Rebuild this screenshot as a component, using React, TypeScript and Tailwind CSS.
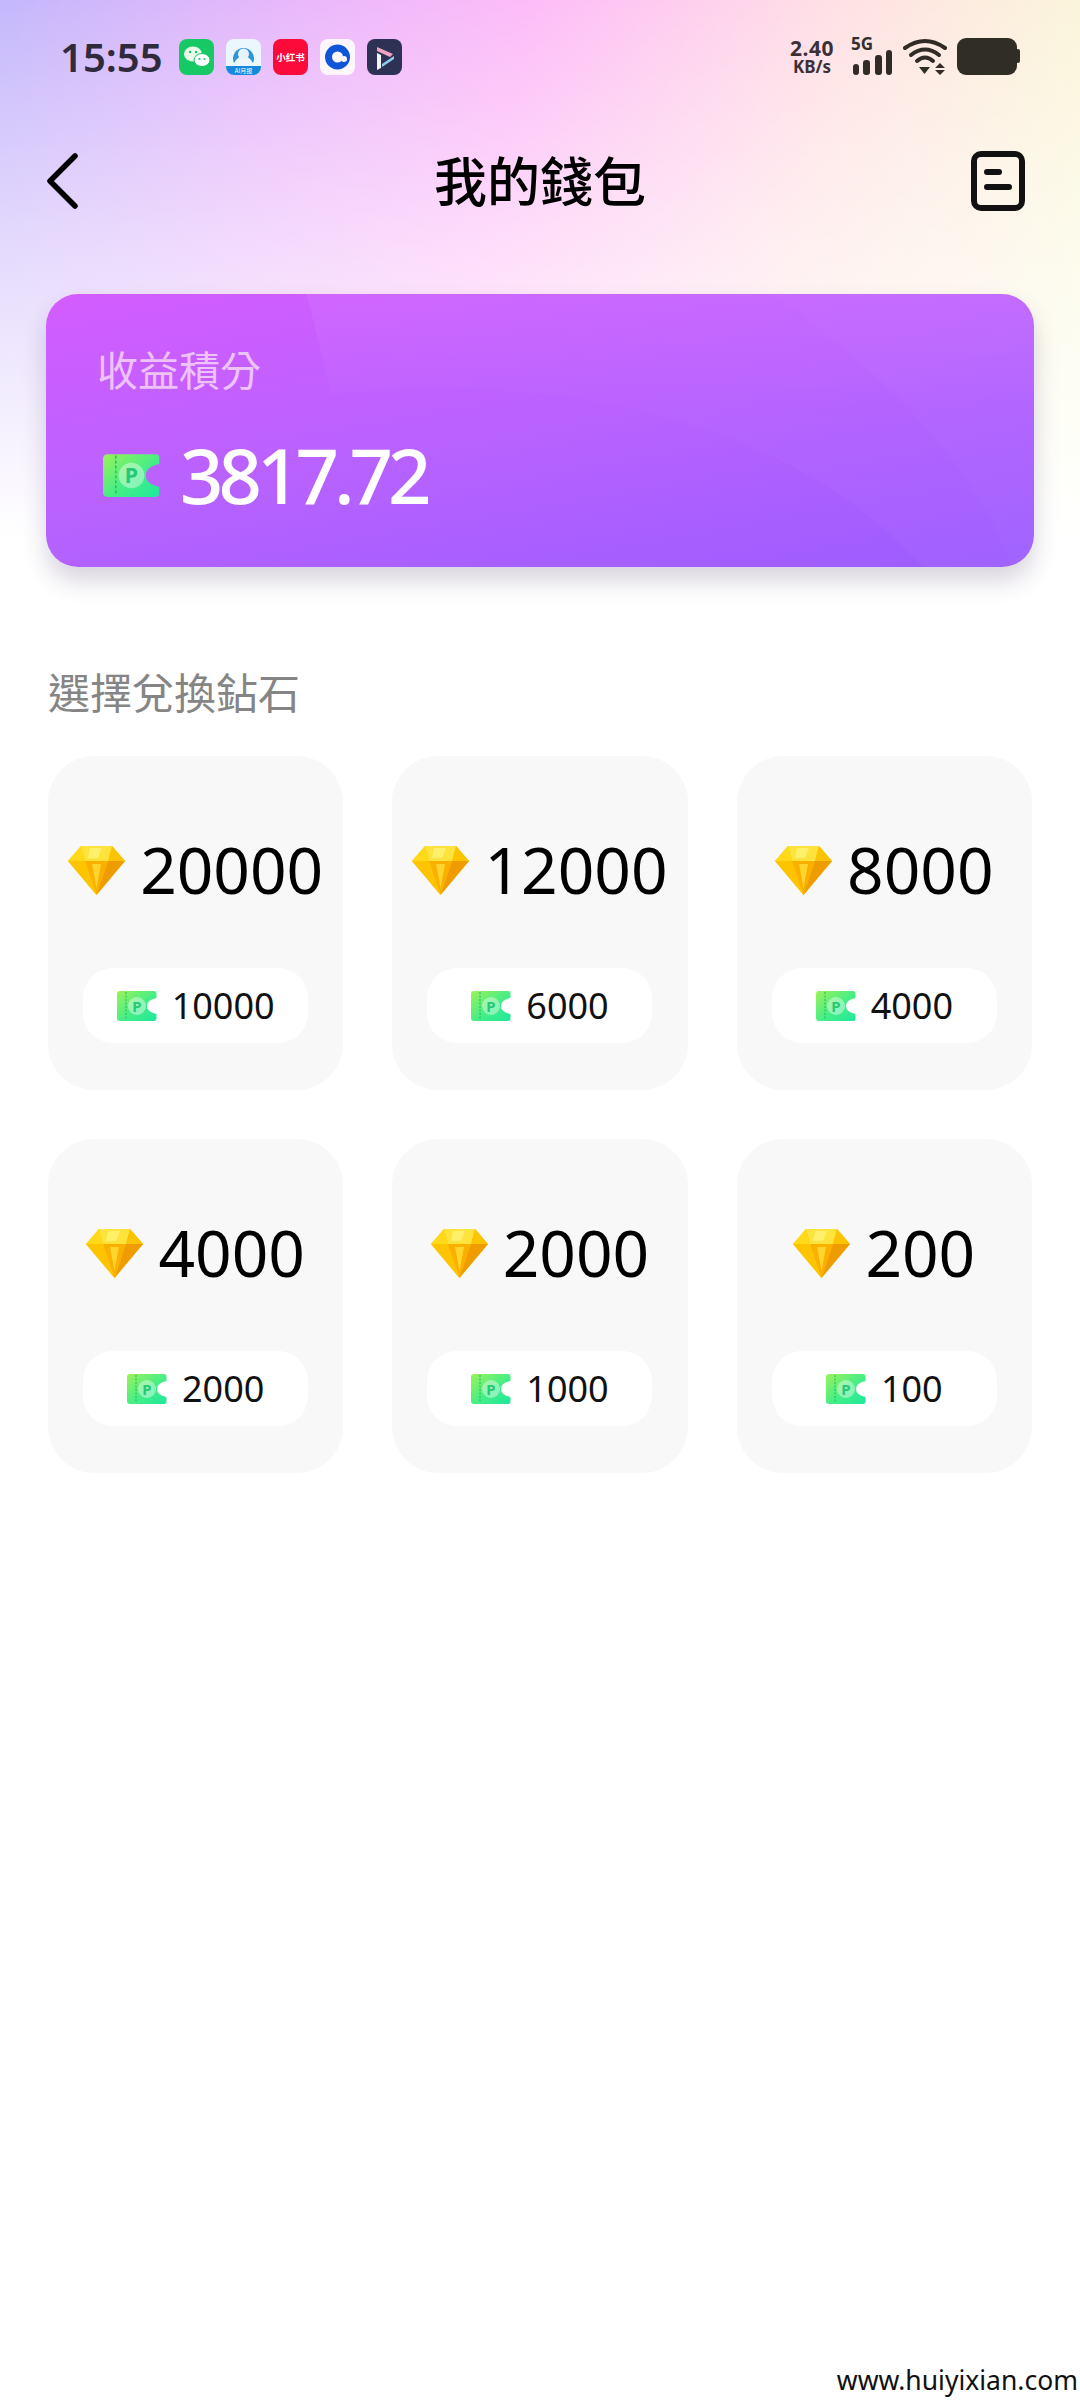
import React from 'react';

const font = { fontFamily: '"Noto Sans", "Noto Sans CJK TC", sans-serif' };

const items = [
  { gems: '20000', points: '10000' },
  { gems: '12000', points: '6000' },
  { gems: '8000', points: '4000' },
  { gems: '4000', points: '2000' },
  { gems: '2000', points: '1000' },
  { gems: '200', points: '100' },
];

function Ticket({ className }: { className: string }) {
  return (
    <svg viewBox="0 0 40 30" className={className}>
      <defs>
        <linearGradient id="tk" x1="0" y1="0" x2="1" y2="1">
          <stop offset="0" stopColor="#9cf25a" />
          <stop offset="0.55" stopColor="#45ee86" />
          <stop offset="1" stopColor="#1fe89c" />
        </linearGradient>
      </defs>
      <path d="M3 0H37a2.5 2.5 0 0 1 2.5 2.5V7Q30 9 30 15T39.5 23V27.5a2.5 2.5 0 0 1-2.5 2.5H3a3 3 0 0 1-3-3V3A3 3 0 0 1 3 0Z" fill="url(#tk)" />
      <path d="M9 1V29" stroke="#1fb868" strokeWidth="1" strokeDasharray="2 1.5" />
      <circle cx="20" cy="15" r="9" fill="#ffffff" fillOpacity="0.4" />
      <text x="20" y="20.5" textAnchor="middle" fontSize="15" fontWeight="700" fill="#27c878" fontFamily="Noto Sans, sans-serif">P</text>
    </svg>
  );
}

function Diamond() {
  return (
    <svg viewBox="0 0 57 49" className="w-[57px] h-[49px] shrink-0">
      <polygon points="13,0 44,0 57,15 28.5,49 0,15" fill="#ffc800" />
      <polygon points="13,0 44,0 40,15 17,15" fill="#ffe33d" />
      <polygon points="22,2 34,2 30,12 20,12" fill="#fff06a" />
      <polygon points="13,0 17,15 0,15" fill="#ffd91a" />
      <polygon points="44,0 57,15 40,15" fill="#fcc400" />
      <polygon points="0,15 17,15 28.5,49" fill="#ffc400" />
      <polygon points="17,15 40,15 28.5,49" fill="#fbb000" />
      <polygon points="40,15 57,15 28.5,49" fill="#ef9c00" />
      <polygon points="24,18 33,18 28.5,42" fill="#ffd52e" />
    </svg>
  );
}

function NotifyIcons() {
  return (
    <div className="flex items-center gap-[12px] ml-[16px]">
      <svg viewBox="0 0 35 36" className="w-[35px] h-[36px]">
        <rect width="35" height="36" rx="8" fill="#17c964" />
        <ellipse cx="14" cy="15" rx="9" ry="7.5" fill="#eafbe9" />
        <ellipse cx="23" cy="21" rx="8" ry="6.5" fill="#ffffff" stroke="#17c964" strokeWidth="1" />
        <circle cx="11" cy="13" r="1.2" fill="#17c964" />
        <circle cx="17" cy="13" r="1.2" fill="#17c964" />
        <circle cx="20.5" cy="20" r="1.1" fill="#17c964" />
        <circle cx="25.5" cy="20" r="1.1" fill="#17c964" />
      </svg>
      <svg viewBox="0 0 35 36" className="w-[35px] h-[36px]">
        <rect width="35" height="36" rx="8" fill="#ecf6fd" />
        <path d="M0 27H35V28a8 8 0 0 1-8 8H8a8 8 0 0 1-8-8Z" fill="#1689de" />
        <path d="M8 24A10.5 10.5 0 1 1 27 24Q23 17 17.5 17T8 24Z" fill="#2b95d8" />
        <circle cx="17.5" cy="15" r="5.5" fill="#e7f3fb" />
        <text x="17.5" y="34" textAnchor="middle" fontSize="6" fill="#ffffff" fontFamily="Noto Sans CJK SC, sans-serif">AI月报</text>
      </svg>
      <svg viewBox="0 0 35 36" className="w-[35px] h-[36px]">
        <rect width="35" height="36" rx="8" fill="#fb0a3a" />
        <text x="17.5" y="22" textAnchor="middle" fontSize="9.5" fontWeight="700" fill="#ffffff" fontFamily="Noto Sans CJK SC, sans-serif">小红书</text>
      </svg>
      <svg viewBox="0 0 35 36" className="w-[35px] h-[36px]">
        <rect width="35" height="36" rx="8" fill="#fdf7fd" />
        <circle cx="17.5" cy="18" r="9" fill="none" stroke="#0f55d8" strokeWidth="7" />
        <circle cx="24" cy="20" r="3" fill="#fdf7fd" />
      </svg>
      <svg viewBox="0 0 35 36" className="w-[35px] h-[36px]">
        <rect width="35" height="36" rx="8" fill="#2d3153" />
        <path d="M10 8L26 15L23 18L10 12Z" fill="#f0a4c2" />
        <path d="M10 14L14 16V29L10 31Z" fill="#f4f4f4" />
        <path d="M15 25L27 17V20L15 28Z" fill="#8fd0f0" />
      </svg>
    </div>
  );
}

function SystemIcons() {
  return (
    <div className="flex items-center mr-[60px] text-[#352e33]">
      <div className="flex flex-col items-center font-bold text-[#3c3036] w-[48px] mr-[15px]">
        <span className="text-[21px] leading-[20px] tracking-[0.5px]">2.40</span>
        <span className="text-[17px] leading-[17px]">KB/s</span>
      </div>
      <div className="relative w-[42px] h-[37px]">
        <span className="absolute left-0 top-[-4px] text-[17px] leading-[20px] font-bold text-[#352e2c]">5G</span>
        <svg viewBox="0 0 42 37" className="w-[42px] h-[37px]">
          <rect x="2" y="26" width="6" height="11" rx="3" fill="#302c25" />
          <rect x="12" y="22" width="7" height="15" rx="3" fill="#302c25" />
          <rect x="24" y="17" width="7" height="20" rx="3" fill="#302c25" />
          <rect x="35" y="12" width="6" height="25" rx="3" fill="#302c25" />
        </svg>
      </div>
      <svg viewBox="0 0 44 37" className="w-[44px] h-[37px] ml-[10px]" fill="none">
        <path d="M2 10Q22 -4 42 10" stroke="#302c25" strokeWidth="4" strokeLinecap="round" />
        <path d="M8 17Q22 6 36 17" stroke="#302c25" strokeWidth="4" strokeLinecap="round" />
        <path d="M14 23Q22 16 30 23" stroke="#302c25" strokeWidth="4" strokeLinecap="round" />
        <path d="M16 29H27L21.5 36Z" fill="#302c25" />
        <path d="M37 25L42 30H32Z M32 32H42L37 37Z" fill="#302c25" />
      </svg>
      <svg viewBox="0 0 63 37" className="w-[63px] h-[37px] ml-[10px]">
        <rect width="60" height="37" rx="9" fill="#302d25" />
        <rect x="59" y="11" width="4" height="14" rx="2" fill="#302d25" />
      </svg>
    </div>
  );
}

function OptionCard({ gems, points }: { gems: string; points: string }) {
  return (
    <div className="h-[334px] rounded-[46px] bg-[#f8f8f8] flex flex-col items-center justify-end pb-[47px]">
      <div className="flex items-center justify-center gap-[15px] h-[60px] mb-[68px]">
        <Diamond />
        <span className="text-[64px] leading-[60px] text-black">{gems}</span>
      </div>
      <div className="w-[225px] h-[75px] rounded-[30px] bg-white flex items-center justify-center gap-[15px]">
        <Ticket className="w-[40px] h-[30px] shrink-0" />
        <span className="text-[36px] leading-[40px] text-[#111111]">{points}</span>
      </div>
    </div>
  );
}

export default function App() {
  return (
    <div
      style={font}
      className="w-[1080px] min-h-[2400px] flex flex-col bg-white bg-no-repeat bg-[length:100%_560px] bg-[image:linear-gradient(to_bottom,rgba(255,255,255,0)_0px,rgba(255,255,255,0.45)_230px,rgba(255,255,255,1)_540px),linear-gradient(100deg,#c4b8fb_0%,#e9b8fb_25%,#fdbcf8_45%,#ffe2e4_72%,#f9fcd8_100%)]"
    >
      <div className="flex items-center justify-between pt-[38px] h-[75px]">
        <div className="flex items-center pl-[60px]">
          <span className="text-[40px] leading-[37px] font-semibold text-[#2f2a3c]">15:55</span>
          <NotifyIcons />
        </div>
        <SystemIcons />
      </div>

      <div className="grid grid-cols-[1fr_auto_1fr] items-center h-[60px] mt-[75px] pl-[46px] pr-[55px]">
        <svg viewBox="0 0 32 56" className="w-[32px] h-[56px]" fill="none">
          <path d="M29 3L4 28L29 53" stroke="#000000" strokeWidth="5.5" strokeLinecap="round" strokeLinejoin="round" />
        </svg>
        <h1 className="ml-[9px] mt-[2px] text-[53px] leading-[60px] font-medium text-black">我的錢包</h1>
        <svg viewBox="0 0 54 60" className="w-[54px] h-[60px] justify-self-end" fill="none">
          <rect x="3" y="3" width="48" height="54" rx="7" stroke="#111111" strokeWidth="6" />
          <path d="M16 21H28M16 36H38" stroke="#111111" strokeWidth="6" strokeLinecap="round" />
        </svg>
      </div>

      <div className="relative mt-[84px] mx-[46px] h-[273px] rounded-[32px] overflow-hidden shadow-[0_14px_24px_rgba(60,40,90,0.2)] bg-[linear-gradient(170deg,#d35cff_0%,#b862ff_50%,#9c5cff_100%)]">
        <svg viewBox="0 0 988 273" className="absolute inset-0 w-full h-full">
          <defs>
            <linearGradient id="sheen" x1="0" y1="0" x2="0" y2="1">
              <stop offset="0" stopColor="#ffffff" stopOpacity="0.06" />
              <stop offset="0.4" stopColor="#ffffff" stopOpacity="0.015" />
              <stop offset="1" stopColor="#ffffff" stopOpacity="0.03" />
            </linearGradient>
          </defs>
          <path d="M260 0C270 35 278 70 285 100C480 80 730 110 877 273H988V0Z" fill="url(#sheen)" />
          <path d="M725 0C830 70 930 170 966 273H988V0Z" fill="#ffffff" fillOpacity="0.02" />
        </svg>
        <div className="relative pl-[51px] pt-[52px]">
          <p className="text-[41px] leading-[48px] text-[#eec2fb]">收益積分</p>
          <div className="flex items-center mt-[39px]">
            <Ticket className="ml-[6px] w-[57px] h-[43px] shrink-0" />
            <span className="ml-[20px] text-[76px] leading-[84px] tracking-[-5px] font-medium text-white">3817.72</span>
          </div>
        </div>
      </div>

      <h2 className="mt-[101px] ml-[48px] text-[42px] leading-[50px] text-[#858585]">選擇兌換鉆石</h2>

      <div className="grid grid-cols-3 gap-x-[49px] gap-y-[49px] mx-[48px] mt-[38px]">
        {items.map((it) => (
          <OptionCard key={it.gems + it.points} gems={it.gems} points={it.points} />
        ))}
      </div>

      <div className="mt-auto flex justify-end pr-[2px] pb-[2px] text-[26.5px] leading-[36px] text-[#111111]">
        www.huiyixian.com
      </div>
    </div>
  );
}
